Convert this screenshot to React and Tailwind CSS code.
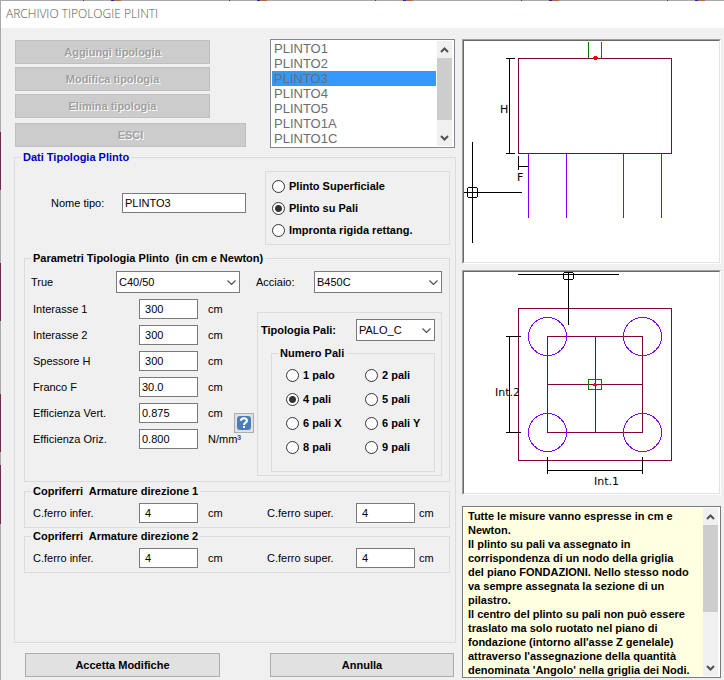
import React from 'react'

const plinti = ['PLINTO1', 'PLINTO2', 'PLINTO3', 'PLINTO4', 'PLINTO5', 'PLINTO1A', 'PLINTO1C']

const parametri = [
  { id: 'int1', label: 'Interasse 1', value: ' 300', unit: 'cm' },
  { id: 'int2', label: 'Interasse 2', value: ' 300', unit: 'cm' },
  { id: 'spess', label: 'Spessore H', value: ' 300', unit: 'cm' },
  { id: 'franco', label: 'Franco F', value: '30.0', unit: 'cm' },
  { id: 'effv', label: 'Efficienza Vert.', value: '0.875', unit: 'cm' },
  { id: 'effo', label: 'Efficienza Oriz.', value: '0.800', unit: 'N/mm³' },
]

const numeroPali = ['1 palo', '2 pali', '4 pali', '5 pali', '6 pali X', '6 pali Y', '8 pali', '9 pali']

const note = `Tutte le misure vanno espresse in cm e
Newton.
Il plinto su pali va assegnato in
corrispondenza di un nodo della griglia
del piano FONDAZIONI. Nello stesso nodo
va sempre assegnata la sezione di un
pilastro.
Il centro del plinto su pali non può essere
traslato ma solo ruotato nel piano di
fondazione (intorno all'asse Z genelale)
attraverso l'assegnazione della quantità
denominata 'Angolo' nella griglia dei Nodi.`

function DisabledButton({ children, className }) {
  return (
    <button
      type="button"
      disabled
      className={`h-6 border border-[#bfbfbf] bg-[#cccccc] font-bold text-[#a0a0a0] [text-shadow:1px_1px_0_#fff] ${className}`}
    >
      {children}
    </button>
  )
}

function Group({ title, titleClass = '', className = '', children }) {
  return (
    <fieldset className={`min-w-0 border border-[#dcdcdc] ${className}`}>
      <legend className={`ml-1.5 px-0.5 leading-[15px] font-bold whitespace-pre ${titleClass}`}>{title}</legend>
      {children}
    </fieldset>
  )
}

function Radio({ name, label, checked }) {
  return (
    <label className="flex items-center gap-1 font-bold whitespace-nowrap">
      <input
        type="radio"
        name={name}
        defaultChecked={checked}
        className="size-[13px] shrink-0 appearance-none rounded-full border border-[#333333] bg-white checked:bg-[radial-gradient(circle,#333333_3px,#ffffff_4px)]"
      />
      {label}
    </label>
  )
}

function Combo({ id, value, className }) {
  return (
    <div className={`relative ${className}`}>
      <select
        id={id}
        className="block h-[22px] w-full appearance-none border border-[#7a7a7a] bg-white pl-0.5 text-black"
      >
        <option>{value}</option>
      </select>
      <svg
        className="pointer-events-none absolute top-2 right-1 h-[7px] w-[9px]"
        viewBox="0 0 9 7"
        fill="none"
        stroke="#505050"
        strokeWidth="1.2"
      >
        <path d="M0.5 1.5L4.5 5.5L8.5 1.5" />
      </svg>
    </div>
  )
}

function NumberBox({ id, value }) {
  return (
    <input
      id={id}
      type="text"
      defaultValue={value}
      className="h-5 w-[59px] shrink-0 border border-[#7a7a7a] bg-white pl-0.5 text-black"
    />
  )
}

function Copriferro({ n }) {
  return (
    <Group title={`Copriferri  Armature direzione ${n}`}>
      <div className="flex items-center py-1 pl-2">
        <label htmlFor={`inf${n}`} className="w-[106px] shrink-0">C.ferro infer.</label>
        <NumberBox id={`inf${n}`} value=" 4" />
        <span className="w-[69px] pl-2.5">cm</span>
        <label htmlFor={`sup${n}`} className="w-[89px] shrink-0">C.ferro super.</label>
        <NumberBox id={`sup${n}`} value=" 4" />
        <span className="pl-1">cm</span>
      </div>
    </Group>
  )
}

function ScrollBar({ thumbClass }) {
  return (
    <div className="flex w-[15px] shrink-0 flex-col bg-[#f0f0f0]">
      <svg className="h-[17px] w-[15px] shrink-0" viewBox="0 0 15 17" fill="none" stroke="#505050" strokeWidth="2">
        <path d="M4 11L7.5 7.5L11 11" />
      </svg>
      <div className={`bg-[#cdcdcd] ${thumbClass}`} />
      <svg className="mt-auto h-[17px] w-[15px] shrink-0" viewBox="0 0 15 17" fill="none" stroke="#505050" strokeWidth="2">
        <path d="M4 7L7.5 10.5L11 7" />
      </svg>
    </div>
  )
}

function Panel({ children }) {
  return (
    <div className="border border-t-[#a0a0a0] border-r-white border-b-white border-l-[#a0a0a0]">
      <div className="border border-t-[#696969] border-r-[#e3e3e3] border-b-[#e3e3e3] border-l-[#696969] bg-white">
        <svg
          viewBox="0 0 255 221"
          className="block w-full font-['DejaVu_Sans',sans-serif] text-[11px]"
          fill="none"
          stroke="#000000"
          shapeRendering="crispEdges"
        >
          {children}
        </svg>
      </div>
    </div>
  )
}

function Prospetto() {
  return (
    <Panel>
      <path stroke="#008000" d="M124.5 1V17M137.5 1V17" />
      <path stroke="#8000ff" d="M64.5 113V177M102.5 113V177M159.5 113V177M197.5 113V177" />
      <rect stroke="#800040" x="54.5" y="17.5" width="153" height="95" />
      <path stroke="none" fill="#ff0000" d="M130 15H133V16H134V18H133V19H130V18H129V16H130Z" />
      <path d="M45.5 17V113M42 17.5H51M42 112.5H51" />
      <path d="M54.5 115V129M54 125.5H64" />
      {/* cursore */}
      <path d="M8.5 101V202M0 151.5H58M4 146.5H13M4 156.5H13M3.5 147V156M13.5 147V156" />
      <text x="36" y="72" stroke="none" fill="#000000">H</text>
      <text x="53" y="140" stroke="none" fill="#000000">F</text>
    </Panel>
  )
}

function Pianta() {
  return (
    <Panel>
      <rect stroke="#800040" x="54.5" y="36.5" width="153" height="152" />
      <rect stroke="#800040" x="83.5" y="64.5" width="95" height="96" />
      <path stroke="#800040" d="M131.5 64V161M83 112.5H179" />
      <g stroke="#8000ff">
        <circle cx="83.5" cy="64.5" r="19" />
        <circle cx="178.5" cy="64.5" r="19" />
        <circle cx="83.5" cy="160.5" r="19" />
        <circle cx="178.5" cy="160.5" r="19" />
      </g>
      <rect stroke="#008000" x="124.5" y="107.5" width="13" height="10" />
      <path stroke="none" fill="#ff0000" d="M130 111H132V112H133V114H129V112H130Z" />
      <path d="M45.5 64V161M42 64.5H57M42 160.5H57" />
      <path d="M83 198.5H179M83.5 185V202M178.5 185V202" />
      {/* cursore */}
      <path d="M54 2.5H155M104.5 0V53M100 0.5H109M100 7.5H109M99.5 1V7M109.5 1V7" />
      <text x="31" y="124" stroke="none" fill="#000000">Int.2</text>
      <text x="130" y="213" stroke="none" fill="#000000">Int.1</text>
    </Panel>
  )
}

function App() {
  return (
    <div className="flex min-h-screen flex-col bg-[#f0f0f0] font-['Liberation_Sans',Arial,sans-serif] text-[11px] leading-[14px] text-black">
      <div className="h-px bg-[repeating-linear-gradient(90deg,#a9a9a9_0px,#a9a9a9_83px,#6b2a4a_83px,#6b2a4a_84px,#a9a9a9_84px,#a9a9a9_111px,#2a2aa8_111px,#2a2aa8_114px,#b06a48_114px,#b06a48_121px,#a9a9a9_121px,#a9a9a9_146px)]" />
      <div className="flex grow">
        <div className="w-px shrink-0 bg-[linear-gradient(#a9a9a9_131px,#6b2a4a_131px,#6b2a4a_189px,#a9a9a9_189px,#a9a9a9_262px,#6b2a4a_262px,#6b2a4a_320px,#a9a9a9_320px,#a9a9a9_393px,#6b2a4a_393px,#6b2a4a_451px,#a9a9a9_451px,#a9a9a9_464px,#6b2a4a_464px,#6b2a4a_523px,#a9a9a9_523px)]" />
        <div className="min-w-0 grow">
          <h1 className="h-[27px] bg-white pl-[5px] font-['Open_Sans',sans-serif] text-xs leading-[26px] font-light text-[#555555]">
            ARCHIVIO TIPOLOGIE PLINTI
          </h1>
          <main className="flex gap-1.5 pt-[11px] pr-[3px] pb-0.5 pl-[13px]">
            <div className="min-w-0 flex-[442]">
              <div className="flex justify-between px-px">
                <div className="flex w-[231px] flex-col items-start gap-[3px] pt-px">
                  <DisabledButton className="w-[195px]">Aggiungi tipologia</DisabledButton>
                  <DisabledButton className="w-[195px]">Modifica tipologia</DisabledButton>
                  <DisabledButton className="w-[195px]">Elimina tipologia</DisabledButton>
                  <DisabledButton className="mt-0.5 w-full">ESCI</DisabledButton>
                </div>
                <div className="flex w-[185px] border border-[#828790] bg-white py-px pr-0.5 pl-px">
                  <select
                    size={7}
                    disabled
                    defaultValue="PLINTO3"
                    aria-label="Tipologie"
                    className="mr-px h-[105px] grow appearance-none overflow-hidden text-[13px] opacity-100"
                  >
                    {plinti.map((p) => (
                      <option
                        key={p}
                        value={p}
                        className="h-[15px] min-h-0 p-0 pl-0.5 leading-[15px] text-[#6d6d6d] checked:bg-[#3399ff] checked:text-[#6d6d6d]"
                      >
                        {p}
                      </option>
                    ))}
                  </select>
                  <ScrollBar thumbClass="h-[62px]" />
                </div>
              </div>

              <Group title="Dati Tipologia Plinto" titleClass="text-[#0000c0]" className="mt-0.5 pb-[69px]">
                <div className="pr-[5px] pl-[9px]">
                  <div className="flex items-start pt-1.5 pl-[27px]">
                    <label htmlFor="nome" className="w-[71px] shrink-0 pt-[25px]">Nome tipo:</label>
                    <input
                      id="nome"
                      type="text"
                      defaultValue="PLINTO3"
                      className="mt-[22px] h-5 w-[124px] border border-[#7a7a7a] bg-white pl-0.5 text-black"
                    />
                    <div className="ml-auto grid w-[185px] auto-rows-[22px] border border-[#dcdcdc] py-[3px] pl-1.5">
                      <Radio name="tipo" label="Plinto Superficiale" />
                      <Radio name="tipo" label="Plinto su Pali" checked />
                      <Radio name="tipo" label="Impronta rigida rettang." />
                    </div>
                  </div>

                  <Group title="Parametri Tipologia Plinto  (in cm e Newton)" className="mt-1.5 pb-[5px]">
                    <div className="flex items-center pt-[5px] pr-[7px] pl-1.5">
                      <label htmlFor="cls" className="w-[85px] shrink-0">True</label>
                      <Combo id="cls" value="C40/50" className="w-[124px]" />
                      <label htmlFor="acciaio" className="ml-auto w-[58px] shrink-0">Acciaio:</label>
                      <Combo id="acciaio" value="B450C" className="w-32" />
                    </div>
                    <div className="flex items-start pt-1.5 pr-[7px] pl-2">
                      <div className="flex w-[201px] shrink-0 flex-col gap-1.5">
                        {parametri.map((p) => (
                          <div key={p.id} className="flex items-center">
                            <label htmlFor={p.id} className="w-[106px] shrink-0">{p.label}</label>
                            <NumberBox id={p.id} value={p.value} />
                            <span className="pl-2.5 whitespace-nowrap">{p.unit}</span>
                          </div>
                        ))}
                      </div>
                      <button
                        type="button"
                        aria-label="Aiuto"
                        className="mt-[114px] flex size-5 shrink-0 items-center justify-center border border-[#adadad] bg-[#e1e1e1]"
                      >
                        <svg viewBox="0 0 16 16" className="size-4" fill="none">
                          <rect x="1" y="1" width="14" height="14" rx="3" fill="#4a7ebb" />
                          <path
                            d="M4.9 5.8C4.9 2.4 11 2.4 11 5.6C11 7.6 8 7.8 8 10"
                            stroke="#ffffff"
                            strokeWidth="2.1"
                          />
                          <rect x="7" y="11" width="2" height="2" fill="#ffffff" />
                        </svg>
                      </button>
                      <div className="mt-[13px] ml-auto w-[185px] border border-[#dcdcdc] pt-1.5 pr-1.5 pb-[3px] pl-[3px]">
                        <div className="flex items-center justify-between">
                          <label htmlFor="palo" className="font-bold whitespace-nowrap">Tipologia Pali:</label>
                          <Combo id="palo" value="PALO_C" className="w-[79px]" />
                        </div>
                        <Group title="Numero Pali" className="mt-[5px] ml-2.5 pb-3">
                          <div className="grid auto-rows-[24px] grid-cols-[79px_auto] pt-0.5 pl-3.5">
                            {numeroPali.map((n) => (
                              <Radio key={n} name="pali" label={n} checked={n === '4 pali'} />
                            ))}
                          </div>
                        </Group>
                      </div>
                    </div>
                  </Group>

                  <div className="mt-0.5 flex flex-col gap-px">
                    <Copriferro n={1} />
                    <Copriferro n={2} />
                  </div>
                </div>
              </Group>

              <div className="mt-2.5 flex justify-between pr-0.5 pl-[11px]">
                <button type="button" className="h-6 w-[195px] border border-[#adadad] bg-[#e1e1e1] font-bold">
                  Accetta Modifiche
                </button>
                <button type="button" className="h-6 w-[184px] border border-[#adadad] bg-[#e1e1e1] font-bold">
                  Annulla
                </button>
              </div>
            </div>

            <div className="flex min-w-0 flex-[259] flex-col gap-1.5">
              <Prospetto />
              <Pianta />
              <div className="mt-[5px] flex h-[172px] border border-[#7a7a7a] bg-white py-px pr-0.5 pl-px">
                <textarea
                  readOnly
                  aria-label="Note"
                  defaultValue={note}
                  className="min-w-0 grow resize-none overflow-hidden bg-[#ffffe1] pt-px pl-1 font-bold whitespace-pre"
                />
                <ScrollBar thumbClass="h-[87px]" />
              </div>
            </div>
          </main>
        </div>
      </div>
    </div>
  )
}

export default App
